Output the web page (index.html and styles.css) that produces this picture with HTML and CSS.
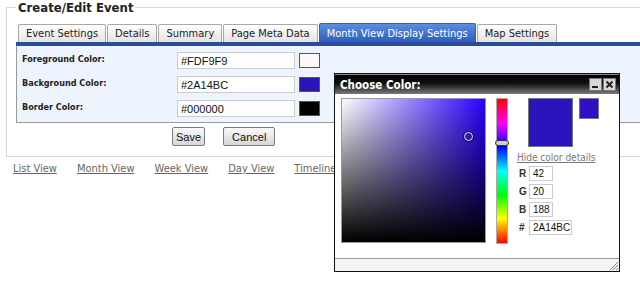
FILE: index.html
```html
<!DOCTYPE html>
<html lang="en">
<head>
  <meta charset="UTF-8" />
  <title>Create/Edit Event</title>
  <link rel="stylesheet" href="styles.css">
</head>
<body>

  <fieldset class="event-box">
    <legend>Create/Edit Event</legend>

    <ul class="tabs">
      <li>Event Settings</li>
      <li>Details</li>
      <li>Summary</li>
      <li>Page Meta Data</li>
      <li class="active">Month View Display Settings</li>
      <li>Map Settings</li>
    </ul>

    <div class="panel">
      <div class="row">
        <label>Foreground Color:</label>
        <input type="text" class="color-input" value="#FDF9F9" />
        <span class="swatch" style="background:#FDF9F9"></span>
      </div>
      <div class="row">
        <label>Background Color:</label>
        <input type="text" class="color-input" value="#2A14BC" />
        <span class="swatch" style="background:#2A14BC"></span>
      </div>
      <div class="row">
        <label>Border Color:</label>
        <input type="text" class="color-input" value="#000000" />
        <span class="swatch" style="background:#000000"></span>
      </div>
    </div>

    <div class="buttons">
      <button type="button" class="btn">Save</button>
      <button type="button" class="btn btn-wide">Cancel</button>
    </div>
  </fieldset>

  <div class="views">
    <a href="#">List View</a>
    <a href="#">Month View</a>
    <a href="#">Week View</a>
    <a href="#">Day View</a>
    <a href="#">Timeline</a>
  </div>

  <!-- colour picker popup -->
  <div class="picker">
    <div class="picker-title">
      <span>Choose Color:</span>
      <span class="win-btns">
        <span class="win-btn">
          <svg width="9" height="9" viewBox="0 0 9 9"><rect x="1" y="6" width="6" height="2" fill="#222"/></svg>
        </span>
        <span class="win-btn">
          <svg width="9" height="9" viewBox="0 0 9 9"><path d="M1.5 1.5 L7.5 7.5 M7.5 1.5 L1.5 7.5" stroke="#222" stroke-width="2"/></svg>
        </span>
      </span>
    </div>

    <div class="picker-body">
      <div class="sv-box" style="background:#2a00ff">
        <div class="sv-white"></div>
        <div class="sv-black"></div>
        <span class="sv-marker" style="left:122px;top:33px"></span>
      </div>

      <div class="hue-bar">
        <span class="hue-handle" style="top:41px"></span>
      </div>

      <div class="details">
        <div class="preview">
          <span class="preview-new" style="background:#2A14BC"></span>
          <span class="preview-old" style="background:#3110c4"></span>
        </div>
        <a href="#" class="hide-link">Hide color details</a>
        <div class="fields">
          <div class="field"><span>R</span><input type="text" value="42" /></div>
          <div class="field"><span>G</span><input type="text" value="20" /></div>
          <div class="field"><span>B</span><input type="text" value="188" /></div>
          <div class="field"><span>#</span><input type="text" class="hex" value="2A14BC" /></div>
        </div>
      </div>
    </div>

    <div class="picker-foot">
      <svg class="grip" width="10" height="10" viewBox="0 0 10 10">
        <path d="M9 1 L1 9 M9 4 L4 9 M9 7 L7 9" stroke="#888" stroke-width="1"/>
      </svg>
    </div>
  </div>

</body>
</html>
```

FILE: styles.css
```css
html, body {
  overflow: hidden;
}

body {
  margin: 0;
  font-family: "DejaVu Sans Condensed", "DejaVu Sans", sans-serif;
  color: #222;
  background: #fff;
}

.event-box {
  margin: 0 -40px 0 6px;
  padding: 0 0 10px 9px;
  border: 1px solid #d8d8d8;
}

.event-box legend {
  padding: 0 2px;
  font-size: 13px;
  line-height: 15px;
  font-weight: bold;
  color: #222;
}

.tabs {
  list-style: none;
  margin: 8px 0 0 0;
  padding: 0 0 0 2px;
  display: flex;
  gap: 1px;
  align-items: flex-end;
  border-bottom: 4px solid #2b4b9b;
}

.tabs li {
  font-size: 11px;
  height: 17px;
  line-height: 17px;
  padding: 0 7px;
  border: 1px solid #a8a8a8;
  border-bottom: none;
  border-radius: 2px 2px 0 0;
  background: linear-gradient(#ffffff, #e4e4e4);
  color: #222;
}

.tabs li.active {
  height: 18px;
  line-height: 19px;
  border-color: #3a5fb0;
  background: linear-gradient(#5b8de0, #2f5cb8);
  color: #fff;
}

.panel {
  background: #eef4fd;
  border: 1px solid #9a9a9a;
  border-top: none;
  border-right: none;
  padding: 6px 0 5px 5px;
  display: flex;
  flex-direction: column;
  gap: 7px;
}

.row {
  display: flex;
  align-items: flex-start;
  height: 17px;
}

.row label {
  width: 155px;
  font-size: 9px;
  font-weight: bold;
  padding-top: 2px;
}

.color-input {
  width: 118px;
  height: 17px;
  box-sizing: border-box;
  border: 1px solid #ccc;
  padding: 0 0 0 3px;
  font-family: "Liberation Sans", Arial, sans-serif;
  font-size: 11px;
  color: #111;
}

.swatch {
  width: 21px;
  height: 15px;
  box-sizing: border-box;
  border: 1px solid #555;
  margin: 1px 0 0 4px;
}

.buttons {
  display: flex;
  gap: 18px;
  padding: 4px 0 0 156px;
}

.btn {
  margin: 0;
  font-family: "Liberation Sans", Arial, sans-serif;
  font-size: 11px;
  height: 19px;
  padding: 0 3px;
  border: 1px solid #7a7a7a;
  border-radius: 2px;
  background: linear-gradient(#fafafa, #d6d6d6);
  color: #111;
}

.btn-wide {
  padding: 0 8px;
}

.views {
  display: flex;
  gap: 20px;
  padding: 5px 0 0 13px;
}

.views a {
  font-size: 11px;
  line-height: 13px;
  color: #666;
}

/* colour picker popup */
.picker {
  position: absolute;
  left: 334px;
  top: 73px;
  width: 286px;
  height: 199px;
  box-sizing: border-box;
  border: 1px solid #111;
  background: #fff;
  display: flex;
  flex-direction: column;
}

.picker-title {
  height: 19px;
  background: linear-gradient(#000 0%, #111 45%, #7a7a7a 100%);
  border-top: 1px solid #888;
  color: #fff;
  font-size: 11.5px;
  font-weight: bold;
  display: flex;
  align-items: center;
  justify-content: space-between;
  padding: 0 3px 0 5px;
}

.win-btns {
  display: flex;
  gap: 1px;
}

.win-btn {
  width: 11px;
  height: 11px;
  background: #d8d8d8;
  border: 1px solid #777;
  display: flex;
  align-items: center;
  justify-content: center;
}

.picker-body {
  flex: 1;
  display: flex;
  align-items: flex-start;
  padding: 4px 0 0 6px;
}

.sv-box {
  position: relative;
  width: 143px;
  height: 143px;
  border: 1px solid #999;
}

.sv-white {
  position: absolute;
  inset: 0;
  background: linear-gradient(to right, #fff, rgba(255,255,255,0));
}

.sv-black {
  position: absolute;
  inset: 0;
  background: linear-gradient(to bottom, rgba(0,0,0,0), #000);
}

.sv-marker {
  position: absolute;
  width: 7px;
  height: 7px;
  border: 1px solid #ddd;
  border-radius: 50%;
  box-shadow: 0 0 0 1px rgba(0,0,0,0.5);
}

.hue-bar {
  position: relative;
  width: 10px;
  height: 144px;
  margin-left: 10px;
  border: 1px solid #aaa;
  background: linear-gradient(#ff0000 0%, #ff00ff 17%, #0000ff 33%, #00ffff 50%, #00ff00 67%, #ffff00 83%, #ff0000 100%);
}

.hue-handle {
  position: absolute;
  left: -2px;
  width: 12px;
  height: 4px;
  border: 1px solid #333;
  border-radius: 3px;
  background: #ccc;
}

.details {
  margin-left: 9px;
  display: flex;
  flex-direction: column;
}

.preview {
  display: flex;
  align-items: flex-start;
  gap: 6px;
  margin-left: 11px;
}

.preview-new {
  width: 45px;
  height: 49px;
  box-sizing: border-box;
  border: 1px solid #777;
}

.preview-old {
  width: 20px;
  height: 21px;
  box-sizing: border-box;
  border: 1px solid #777;
}

.hide-link {
  margin-top: 5px;
  font-size: 10px;
  color: #777;
  line-height: 12px;
}

.fields {
  margin-top: 2px;
}

.field {
  display: flex;
  align-items: flex-start;
  height: 18px;
  font-family: "Liberation Sans", Arial, sans-serif;
  font-size: 10px;
  font-weight: bold;
  color: #333;
}

.field span {
  width: 10px;
  margin-left: 2px;
  line-height: 15px;
}

.field input {
  width: 24px;
  height: 15px;
  box-sizing: border-box;
  border: 1px solid #ccc;
  padding: 0 0 0 3px;
  font-family: "Liberation Sans", Arial, sans-serif;
  font-size: 10px;
  color: #111;
}

.field input.hex {
  width: 43px;
}

.picker-foot {
  height: 12px;
  border-top: 1px solid #999;
  background: #f4f4f4;
  display: flex;
  justify-content: flex-end;
  align-items: flex-end;
}
```
